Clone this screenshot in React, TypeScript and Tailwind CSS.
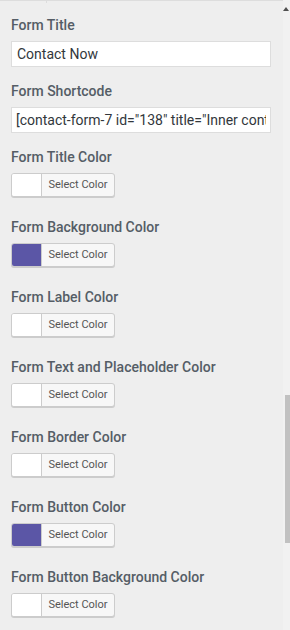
import React from "react";

const colorFields: { label: string; color: string }[] = [
  { label: "Form Title Color", color: "#ffffff" },
  { label: "Form Background Color", color: "#5b56a6" },
  { label: "Form Label Color", color: "#ffffff" },
  { label: "Form Text and Placeholder Color", color: "#ffffff" },
  { label: "Form Border Color", color: "#ffffff" },
  { label: "Form Button Color", color: "#5b56a6" },
  { label: "Form Button Background Color", color: "#ffffff" },
];

function Label({ children }: { children: React.ReactNode }) {
  return (
    <div className="text-[14px] leading-[20px] font-medium text-[#555d66] whitespace-nowrap">
      {children}
    </div>
  );
}

function ColorButton({ color }: { color: string }) {
  return (
    <div className="flex w-[104px] h-[24px] rounded-[3px] border border-[#cccccc] shadow-[0_1px_0_#cccccc] overflow-hidden bg-[#f7f7f7]">
      <div className="w-[30px] h-full border-r border-[#cccccc]" style={{ backgroundColor: color }} />
      <div className="flex-1 flex items-center justify-center text-[11px] text-[#555555]">
        Select Color
      </div>
    </div>
  );
}

export default function App() {
  return (
    <div
      className="w-[290px] h-[630px] bg-[#eeeeee] flex overflow-hidden relative"
      style={{ fontFamily: "Roboto, 'Liberation Sans', sans-serif" }}
    >
      <div className="absolute top-0 left-0 w-[290px] h-[1px] bg-[#dddddd]" />
      <div className="absolute top-0 left-[46px] w-[1px] h-[3px] bg-[#dddddd]" />
      <div className="w-[283px] flex flex-col pl-[11px] pt-[15px]">
        <Label>Form Title</Label>
        <input
          readOnly
          value="Contact Now"
          className="mt-[6px] w-[260px] h-[26px] bg-white border border-[#dddddd] px-[5px] text-[14px] text-[#32373c] outline-none"
          style={{ fontFamily: "Roboto, 'Liberation Sans', sans-serif" }}
        />
        <div className="mt-[14px]">
          <Label>Form Shortcode</Label>
        </div>
        <input
          readOnly
          value={'[contact-form-7 id="138" title="Inner contact form"]'}
          className="mt-[6px] w-[260px] h-[26px] bg-white border border-[#dddddd] px-[4px] text-[14px] text-[#32373c] outline-none"
          style={{ fontFamily: "Roboto, 'Liberation Sans', sans-serif" }}
        />
        <div className="flex flex-col mt-[14px] gap-[20px]">
          {colorFields.map((f) => (
            <div key={f.label} className="flex flex-col gap-[6px]">
              <Label>{f.label}</Label>
              <ColorButton color={f.color} />
            </div>
          ))}
        </div>
      </div>
      <div className="w-[7px] h-full bg-[#f1f1f1] flex flex-col items-end relative">
        <svg width="6" height="4" viewBox="0 0 6 4" className="mt-[7px] mr-[1px]">
          <path d="M3 0 L6 4 L0 4 Z" fill="#505050" />
        </svg>
        <div className="absolute right-0 top-[395px] w-[5px] h-[148px] bg-[#c1c1c1]" />
      </div>
    </div>
  );
}
